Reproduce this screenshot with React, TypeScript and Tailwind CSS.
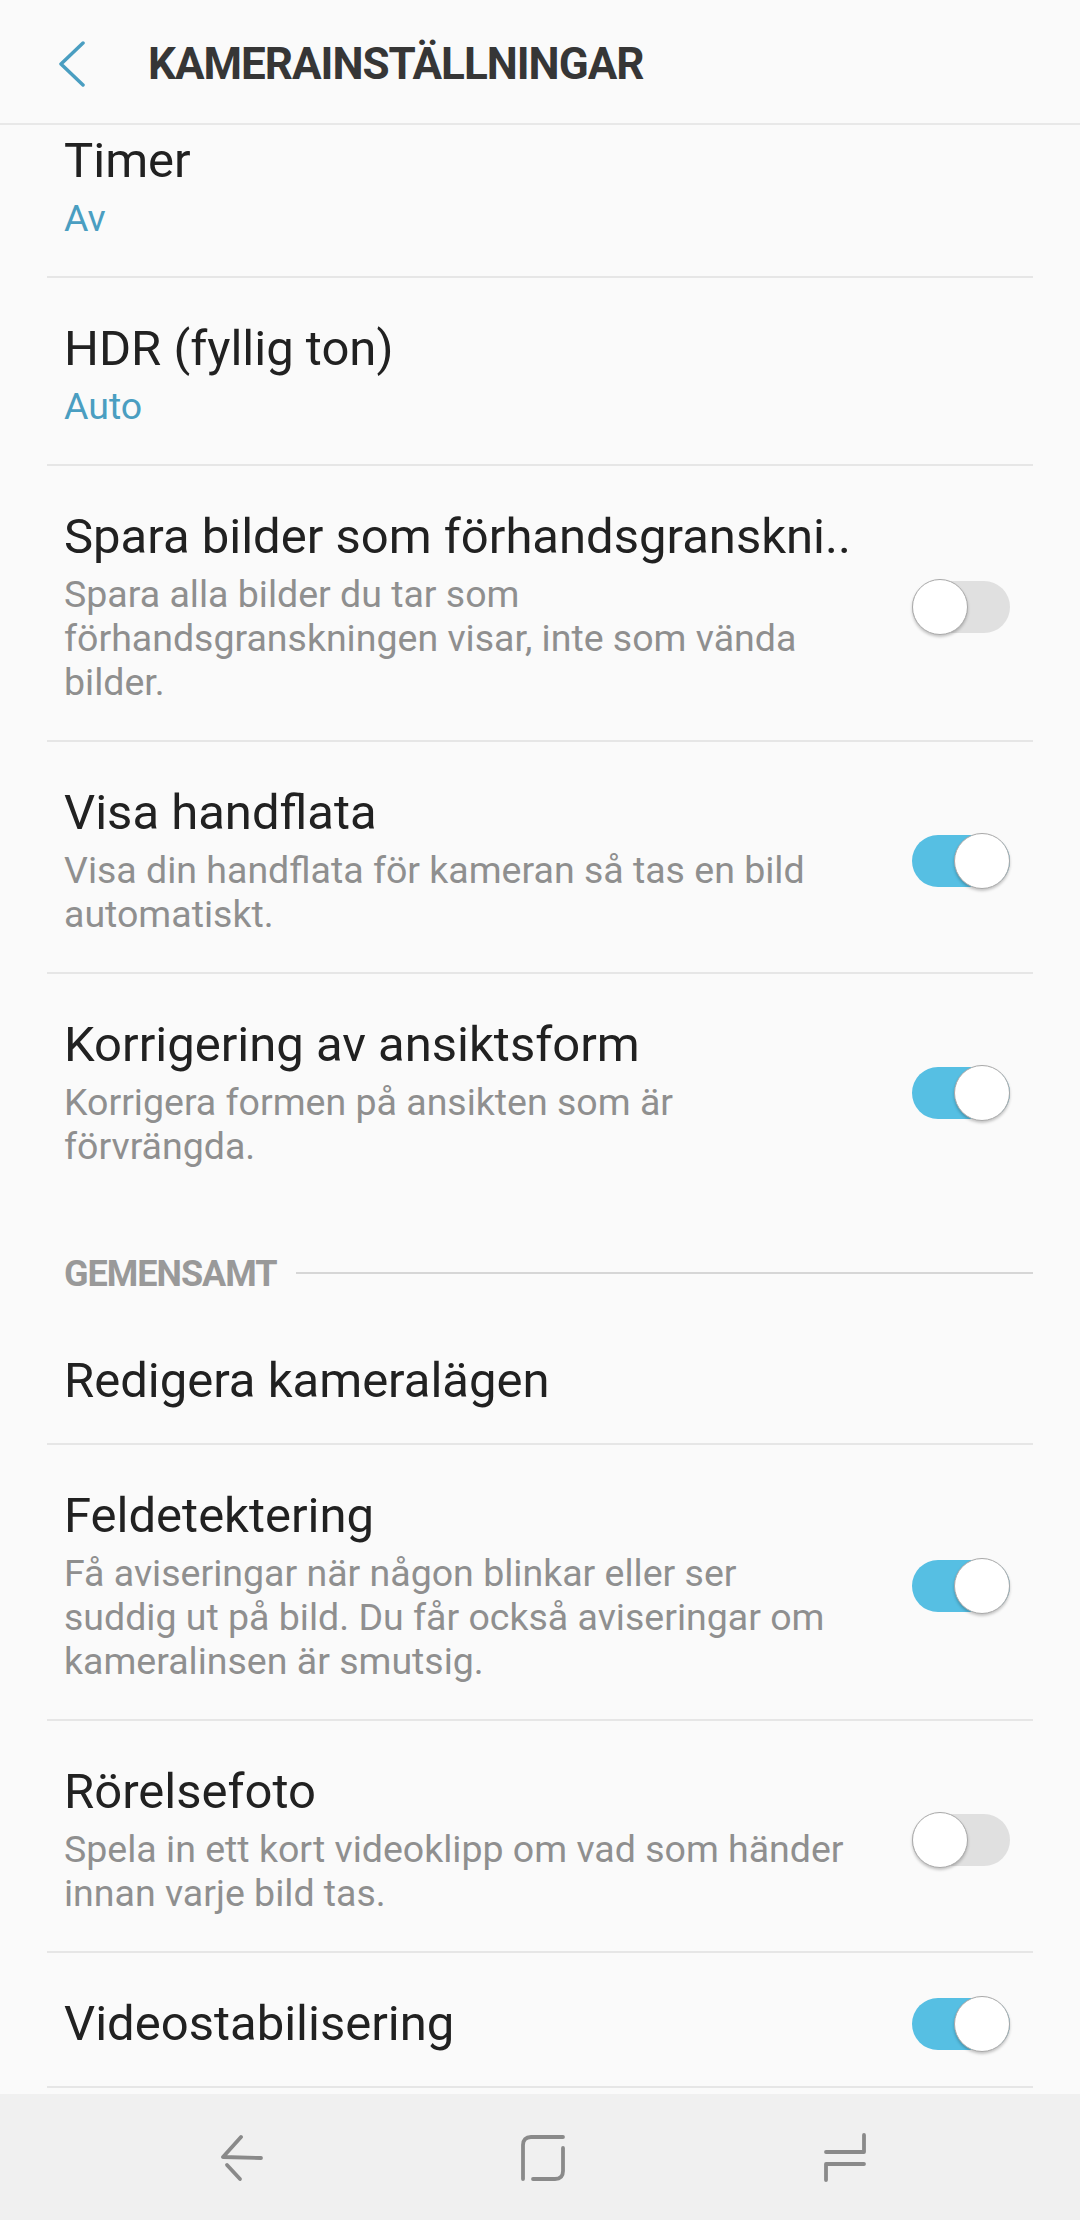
// Camera settings screen (Samsung style)
type Item = {
  title: string;
  value?: string;
  desc?: string;
  toggle?: boolean;
  divider?: boolean;
  first?: boolean;
};

const cameraItems: Item[] = [
  { title: 'Timer', value: 'Av', divider: true, first: true },
  { title: 'HDR (fyllig ton)', value: 'Auto', divider: true },
  {
    title: 'Spara bilder som förhandsgranskni..',
    desc: 'Spara alla bilder du tar som förhandsgranskningen visar, inte som vända bilder.',
    toggle: false,
    divider: true,
  },
  {
    title: 'Visa handflata',
    desc: 'Visa din handflata för kameran så tas en bild automatiskt.',
    toggle: true,
    divider: true,
  },
  {
    title: 'Korrigering av ansiktsform',
    desc: 'Korrigera formen på ansikten som är förvrängda.',
    toggle: true,
    divider: false,
  },
];

const commonItems: Item[] = [
  { title: 'Redigera kameralägen', divider: true },
  {
    title: 'Feldetektering',
    desc: 'Få aviseringar när någon blinkar eller ser suddig ut på bild. Du får också aviseringar om kameralinsen är smutsig.',
    toggle: true,
    divider: true,
  },
  {
    title: 'Rörelsefoto',
    desc: 'Spela in ett kort videoklipp om vad som händer innan varje bild tas.',
    toggle: false,
    divider: true,
  },
  { title: 'Videostabilisering', toggle: true, divider: true },
];

function Toggle({ on }: { on: boolean }) {
  return (
    <div className="relative w-[98px] h-[56px] shrink-0">
      <div
        className={`absolute left-0 right-0 top-[2px] h-[52px] rounded-full ${on ? 'bg-[#56bfe3]' : 'bg-[#e0e0e0]'}`}
      />
      <div
        className={`absolute top-0 w-[56px] h-[56px] rounded-full bg-white border-[1.5px] border-[#a9a9a9] shadow-[0_2px_3px_rgba(0,0,0,0.22)] ${on ? 'left-[42px]' : 'left-0'}`}
      />
    </div>
  );
}

function SettingRow({ item }: { item: Item }) {
  const hasSub = Boolean(item.value || item.desc);
  return (
    <div
      className={`flex items-center justify-between pl-[17px] pr-[23px] ${item.first ? 'pt-[8px]' : 'pt-[43px]'} ${hasSub ? 'pb-[36px]' : 'pb-[34px]'} ${item.divider ? 'border-b-2 border-[#e6e6e6]' : ''}`}
    >
      <div className="w-[788px]">
        <div className="text-[49px] leading-[56px] text-[#212121] whitespace-nowrap">{item.title}</div>
        {item.value && <div className="mt-[7px] text-[37.5px] leading-[44px] text-[#4a9ec1]">{item.value}</div>}
        {item.desc && <div className="mt-[7px] text-[37.5px] leading-[44px] text-[#8f8f8f]">{item.desc}</div>}
      </div>
      {item.toggle !== undefined && <Toggle on={item.toggle} />}
    </div>
  );
}

function NavBar() {
  return (
    <div className="h-[126px] shrink-0 bg-[#f0f0f0] flex items-center justify-center gap-[242px] pl-[6px]">
      <svg width="60" height="60" viewBox="0 0 60 60" fill="none" stroke="#8a8a8a" strokeWidth="3.8" strokeLinecap="round" strokeLinejoin="round">
        <path d="M30 10 L12 30 L50 31" />
        <path d="M16 38 L29 52" />
      </svg>
      <svg width="60" height="60" viewBox="0 0 60 60" fill="none" stroke="#8a8a8a" strokeWidth="3.8" strokeLinecap="round" strokeLinejoin="round">
        <path d="M10 52 L10 18 Q10 10 18 10 L50 10" />
        <path d="M50 21 L50 44 Q50 52 42 52 L20 52" />
      </svg>
      <svg width="60" height="60" viewBox="0 0 60 60" fill="none" stroke="#8a8a8a" strokeWidth="3.8" strokeLinecap="round" strokeLinejoin="round">
        <path d="M49 8 L49 25 L11 25" />
        <path d="M49 37 L11 37 L11 53" />
      </svg>
    </div>
  );
}

export default function App() {
  return (
    <div className="h-[2220px] w-[1080px] flex flex-col bg-[#fafafa] font-['Roboto',sans-serif] overflow-hidden">
      <div className="h-[125px] shrink-0 flex items-center border-b-2 border-[#e8e8e8] pl-[58px] pt-[4px]">
        <svg width="28" height="46" viewBox="0 0 28 46" fill="none" stroke="#4a9ec1" strokeWidth="3.5" strokeLinecap="round" strokeLinejoin="round">
          <path d="M25 2 L3 23 L25 44" />
        </svg>
        <h1 className="ml-[62px] text-[44px] leading-none font-bold tracking-[-1px] text-[#363636]">
          KAMERAINSTÄLLNINGAR
        </h1>
      </div>

      <div className="flex-1 overflow-hidden px-[47px]">
        {cameraItems.map((item) => (
          <SettingRow key={item.title} item={item} />
        ))}

        <div className="flex items-center gap-[19px] pl-[17px] pt-[48px] pb-[14px]">
          <span className="text-[36px] leading-[44px] font-bold tracking-[-1px] text-[#999999]">GEMENSAMT</span>
          <div className="flex-1 h-[2px] bg-[#d6d6d6] mt-[-3px]" />
        </div>

        {commonItems.map((item) => (
          <SettingRow key={item.title} item={item} />
        ))}
      </div>

      <NavBar />
    </div>
  );
}
